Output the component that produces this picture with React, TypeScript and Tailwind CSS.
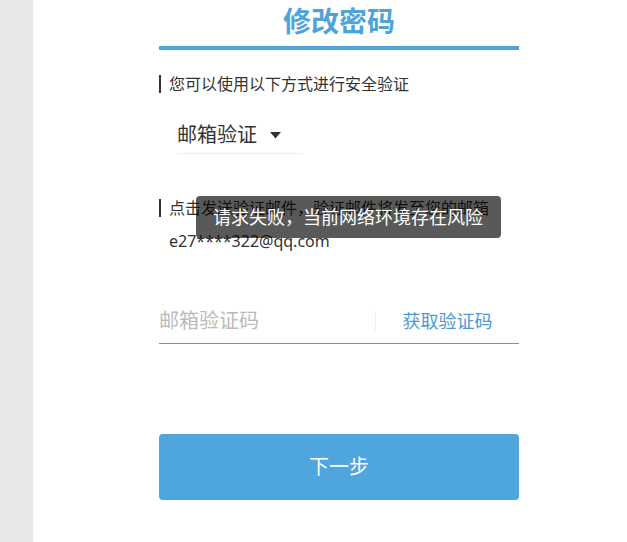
import React from "react";

export default function App() {
  const font = { fontFamily: '"Noto Sans", "Noto Sans CJK SC", sans-serif' };
  return (
    <div className="relative flex min-h-[542px] w-[627px] bg-white text-[#333]" style={font}>
      <div className="w-[33px] shrink-0 bg-[#e8e8e8]" />
      <div className="flex-1 pl-[126px]">
        <div className="flex w-[360px] flex-col">
          <div className="h-[46px] text-center text-[28px] font-bold leading-[42px] text-[#4ea3db]">修改密码</div>
          <div className="h-[4px] bg-[#4ea5dc]" />
          <div className="mt-[25px] flex h-[18px] items-center border-l-2 border-[#333] pl-[8px] text-[16px] leading-[18px]">
            您可以使用以下方式进行安全验证
          </div>
          <div className="ml-[18px] mt-[28px] flex w-[126px] items-center border-b border-[#eee] pb-[4px]">
            <span className="text-[20px] leading-[28px] text-[#333]">邮箱验证</span>
            <svg className="ml-[13px] mt-[1px]" width="11" height="7" viewBox="0 0 11 7">
              <path d="M0 0 L11 0 L5.5 6.5 Z" fill="#333" />
            </svg>
          </div>
          <div className="mt-[45px] flex h-[18px] items-center border-l-2 border-[#333] pl-[8px] text-[16px] leading-[18px]">
            点击发送验证邮件，验证邮件将发至您的邮箱
          </div>
          <div className="ml-[10px] mt-[12px] text-[16px] leading-[24px] text-[#333]">e27****322@qq.com</div>
          <div className="mt-[46px] flex h-[45px] items-center border-b border-[#5b9bd5]">
            <div className="flex-1 text-[20px] leading-[28px] text-[#bbb]">邮箱验证码</div>
            <div className="h-[20px] w-px bg-[#eee]" />
            <div className="w-[143px] text-center text-[18px] leading-[26px] text-[#4a9ad8]">获取验证码</div>
          </div>
          <button className="mt-[90px] flex h-[66px] items-center justify-center rounded-[4px] bg-[#4fa5dd] text-[20px] text-white">
            下一步
          </button>
        </div>
      </div>
      <div className="absolute left-[196px] top-[196px] flex h-[42px] w-[305px] items-center rounded-[4px] bg-black/65 pl-[17px] text-[18px] leading-[24px] text-white">
        请求失败，当前网络环境存在风险
      </div>
    </div>
  );
}
